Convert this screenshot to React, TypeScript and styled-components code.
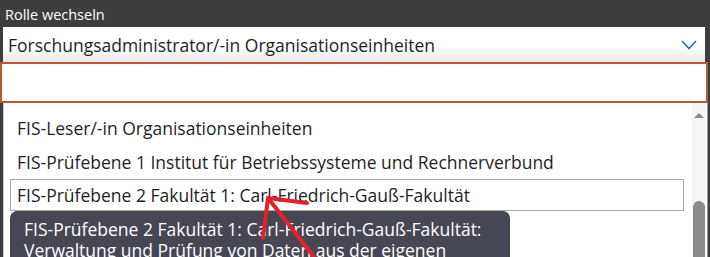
import React from "react";
import styled, { createGlobalStyle } from "styled-components";

const GlobalStyle = createGlobalStyle`
  html, body {
    margin: 0;
    padding: 0;
    background: #3c3c3c;
  }
  body {
    font-family: "Open Sans", "Noto Sans", sans-serif;
  }
`;

const Panel = styled.div`
  position: relative;
  width: 710px;
  height: 257px;
  overflow: hidden;
  background: #3d3d3d;
  display: flex;
  flex-direction: column;
`;

const Header = styled.div`
  height: 27px;
  padding-left: 5px;
  color: #ffffff;
  font-size: 14.5px;
  line-height: 30px;
`;

const SelectBox = styled.div`
  height: 35px;
  margin: 0 5px 0 3px;
  padding: 0 8px 0 5px;
  display: flex;
  align-items: center;
  justify-content: space-between;
  background: linear-gradient(#ffffff 55%, #e9e9e9);
  color: #1f1f1f;
  font-size: 17.5px;
`;

const SearchInput = styled.input`
  box-sizing: border-box;
  height: 41px;
  width: 708px;
  margin: 0;
  border: 2px solid #c1582b;
  outline: none;
  background: #ffffff;
`;

const ListArea = styled.div`
  flex: 1;
  display: flex;
  margin: 0 2px 0 3px;
  background: #ffffff;
  border-left: 1px solid #cfcfcf;
  border-right: 1px solid #9a9a9a;
`;

const Items = styled.div`
  flex: 1;
  padding: 8px 0 0 6px;
  display: flex;
  flex-direction: column;
`;

const Item = styled.div<{ $active?: boolean }>`
  height: ${(p) => (p.$active ? "30px" : "32px")};
  margin-right: 8px;
  padding-left: 6px;
  display: flex;
  align-items: center;
  font-size: 17.5px;
  color: #1f1f1f;
  border: 1px solid ${(p) => (p.$active ? "#a9a9a9" : "transparent")};
`;

const ScrollTrack = styled.div`
  width: 14px;
  margin-right: 1px;
  background: #f6f6f6;
  display: flex;
  flex-direction: column;
  align-items: center;
  padding-top: 10px;
`;

const ScrollArrow = styled.div`
  width: 0;
  height: 0;
  border-left: 5px solid transparent;
  border-right: 5px solid transparent;
  border-bottom: 5px solid #8c8c8c;
`;

const ScrollThumb = styled.div`
  width: 12px;
  margin-top: 83px;
  flex: 1;
  border-radius: 6px 6px 0 0;
  background: #8b8b8b;
`;

const Tooltip = styled.div`
  position: absolute;
  left: 10px;
  top: 211px;
  width: 486px;
  height: 60px;
  padding: 8px 0 0 14px;
  border-radius: 7px 7px 0 0;
  background: #474753;
  color: #ffffff;
  font-size: 17.5px;
  line-height: 21px;
  white-space: nowrap;
`;

const Annotation = styled.svg`
  position: absolute;
  left: 0;
  top: 0;
  pointer-events: none;
`;

const Chevron = () => (
  <svg width="16" height="10" viewBox="0 0 16 10">
    <path d="M1 1 L8 8.5 L15 1" fill="none" stroke="#3b6a8c" strokeWidth="1.6" />
  </svg>
);

export default function App() {
  return (
    <>
      <GlobalStyle />
      <Panel>
        <Header>Rolle wechseln</Header>
        <SelectBox>
          <span>Forschungsadministrator/-in Organisationseinheiten</span>
          <Chevron />
        </SelectBox>
        <SearchInput />
        <ListArea>
          <Items>
            <Item>FIS-Leser/-in Organisationseinheiten</Item>
            <Item>FIS-Prüfebene 1 Institut für Betriebssysteme und Rechnerverbund</Item>
            <Item $active>FIS-Prüfebene 2 Fakultät 1: Carl-Friedrich-Gauß-Fakultät</Item>
          </Items>
          <ScrollTrack>
            <ScrollArrow />
            <ScrollThumb />
          </ScrollTrack>
        </ListArea>
        <Tooltip>
          FIS-Prüfebene 2 Fakultät 1: Carl-Friedrich-Gauß-Fakultät:
          <br />
          Verwaltung und Prüfung von Daten aus der eigenen
        </Tooltip>
        <Annotation width="710" height="257" viewBox="0 0 710 257">
          <g stroke="#e5202b" strokeWidth="4" strokeLinecap="round" fill="none">
            <path d="M318 262 L268 198" />
            <path d="M268 198 L307 203" />
            <path d="M268 198 L263 238" />
          </g>
        </Annotation>
      </Panel>
    </>
  );
}
